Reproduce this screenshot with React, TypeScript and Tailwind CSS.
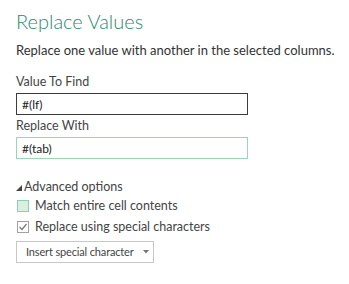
import React, { useState } from 'react';

export default function App() {
    const [find, setFind] = useState('#(lf)');
    const [replace, setReplace] = useState('#(tab)');
    const [matchAll, setMatchAll] = useState(false);
    const [special, setSpecial] = useState(true);

    return (
        <div className="w-[349px] h-[284px] bg-white text-[#444] font-['Lato',sans-serif] px-4 pt-[7px]">
            <h1 className="text-[20px] font-light leading-[28px] text-[#2b8a6e]">Replace Values</h1>
            <p className="text-[13px] leading-[18px] mt-[6px] text-[#333] whitespace-nowrap">Replace one value with another in the selected columns.</p>

            <label className="block text-[12.5px] leading-[16px] mt-[15px] text-[#444]">Value To Find</label>
            <input
                value={find}
                onChange={(e) => setFind(e.target.value)}
                className="block w-[232px] h-[22px] mt-[3px] px-[5px] border border-[#3c3c3c] text-[12px] text-[#222] outline-none"
            />

            <label className="block text-[12.5px] leading-[16px] mt-[3px] text-[#444]">Replace With</label>
            <input
                value={replace}
                onChange={(e) => setReplace(e.target.value)}
                className="block w-[232px] h-[22px] mt-[3px] px-[5px] border border-[#9ad5b6] text-[12px] text-[#222] outline-none"
            />

            <div className="flex items-center mt-[20px] h-[16px]">
                <svg width="6" height="6" viewBox="0 0 6 6" className="mr-[2px] mt-[2px]">
                    <polygon points="6,0 6,6 0,6" fill="#444" />
                </svg>
                <span className="text-[12.5px] leading-[16px]">Advanced options</span>
            </div>

            <label className="flex items-center mt-[4px] h-[14px] cursor-pointer" onClick={() => setMatchAll(!matchAll)}>
                <span className="w-[12px] h-[12px] ml-px border border-[#8fcfae] bg-[#d8efe2] flex items-center justify-center">
                    {matchAll && (
                        <svg width="10" height="10" viewBox="0 0 10 10"><path d="M1.5 5 L4 7.5 L8.5 2" stroke="#777" strokeWidth="1.2" fill="none" /></svg>
                    )}
                </span>
                <span className="text-[12.5px] ml-[6px] leading-[16px]">Match entire cell contents</span>
            </label>

            <label className="flex items-center mt-[7px] h-[14px] cursor-pointer" onClick={() => setSpecial(!special)}>
                <span className="w-[12px] h-[12px] ml-px border border-[#a0a0a0] bg-white flex items-center justify-center">
                    {special && (
                        <svg width="10" height="10" viewBox="0 0 10 10"><path d="M1.5 5 L4 7.5 L8.5 2" stroke="#777" strokeWidth="1.2" fill="none" /></svg>
                    )}
                </span>
                <span className="text-[12.5px] ml-[6px] leading-[16px]">Replace using special characters</span>
            </label>

            <button className="flex items-center mt-[7px] w-[138px] h-[22px] border border-[#c8c8c8] bg-white pl-[9px] text-[11px] tracking-[-0.15px] text-[#444] whitespace-nowrap">
                <span>Insert special character</span>
                <svg width="6" height="4" viewBox="0 0 6 4" className="ml-[9px] shrink-0">
                    <polygon points="0,0 6,0 3,3.5" fill="#777" />
                </svg>
            </button>
        </div>
    );
}
